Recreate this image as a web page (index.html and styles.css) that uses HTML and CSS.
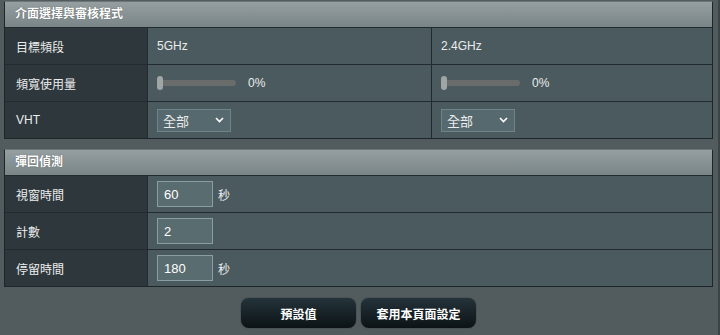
FILE: index.html
```html
<!DOCTYPE html>
<html lang="zh-Hant">
<head>
<meta charset="utf-8">
<link rel="stylesheet" href="styles.css">
</head>
<body>
<div class="page">
  <section class="table">
    <div class="thead">介面選擇與審核程式</div>
    <div class="row">
      <div class="label">目標頻段</div>
      <div class="cell">5GHz</div>
      <div class="cell">2.4GHz</div>
    </div>
    <div class="row">
      <div class="label">頻寬使用量</div>
      <div class="cell"><span class="slider"><span class="thumb"></span></span><span class="pct">0%</span></div>
      <div class="cell"><span class="slider"><span class="thumb"></span></span><span class="pct">0%</span></div>
    </div>
    <div class="row">
      <div class="label">VHT</div>
      <div class="cell"><span class="select">全部<svg class="chev" width="9" height="6" viewBox="0 0 9 6"><path d="M1 1 L4.5 4.5 L8 1" fill="none" stroke="#fff" stroke-width="1.6"/></svg></span></div>
      <div class="cell"><span class="select">全部<svg class="chev" width="9" height="6" viewBox="0 0 9 6"><path d="M1 1 L4.5 4.5 L8 1" fill="none" stroke="#fff" stroke-width="1.6"/></svg></span></div>
    </div>
  </section>

  <section class="table second">
    <div class="thead">彈回偵測</div>
    <div class="row row2">
      <div class="label">視窗時間</div>
      <div class="cell"><span class="input">60</span><span class="unit">秒</span></div>
    </div>
    <div class="row row2">
      <div class="label">計數</div>
      <div class="cell"><span class="input">2</span></div>
    </div>
    <div class="row row2">
      <div class="label">停留時間</div>
      <div class="cell"><span class="input">180</span><span class="unit">秒</span></div>
    </div>
  </section>

  <div class="actions">
    <button class="btn">預設值</button>
    <button class="btn">套用本頁面設定</button>
  </div>
</div>
</body>
</html>
```

FILE: styles.css
```css
html, body {
  margin: 0;
  padding: 0;
  background: #525b5d;
}
body {
  width: 720px;
  height: 335px;
  overflow: hidden;
  font-family: "Liberation Sans", "Noto Sans CJK TC", sans-serif;
  font-size: 12px;
  color: #ececec;
}
.page {
  padding: 1px 5px 0 4px;
  border-right: 2px solid #3c4446;
  width: 709px;
  height: 334px;
}
.table {
  border: 1px solid #1e2629;
  border-top-color: #6c7679;
}
.second {
  margin-top: 10px;
}
.thead {
  height: 25px;
  line-height: 25px;
  padding-left: 10px;
  background: linear-gradient(#959fa1, #7a8587);
  border-bottom: 1px solid #212a2d;
  font-weight: bold;
  color: #fff;
  text-shadow: 0 0 1px rgba(0,0,0,0.5);
}
.row {
  display: grid;
  grid-template-columns: 142px 284px 1fr;
  height: 37px;
  box-sizing: border-box;
  border-bottom: 1px solid #222b2e;
}
.row:last-child {
  border-bottom: none;
  height: 36px;
}
.row2 {
  grid-template-columns: 142px 1fr;
}
.label {
  background: #2e383c;
  padding-left: 11px;
  display: flex;
  align-items: center;
}
.cell {
  background: #4a5a5e;
  border-left: 1px solid #222b2e;
  padding-left: 9px;
  display: flex;
  align-items: center;
}
.slider {
  position: relative;
  width: 78px;
  height: 6px;
  background: #6a6c6c;
  border-radius: 3px;
  margin-left: 1px;
}
.thumb {
  position: absolute;
  left: -1px;
  top: -4px;
  width: 6px;
  height: 14px;
  background: #a0a6a6;
  border-radius: 3px;
}
.pct {
  margin-left: 12px;
}
.select {
  width: 74px;
  height: 23px;
  box-sizing: border-box;
  border: 1px solid #6f8489;
  background: #56696e;
  display: flex;
  align-items: center;
  justify-content: space-between;
  padding: 0 6px 0 5px;
  font-size: 13px;
}
.input {
  width: 56px;
  height: 26px;
  box-sizing: border-box;
  border: 1px solid #8a9ea2;
  background: #596c70;
  display: flex;
  align-items: center;
  padding-left: 6px;
  font-size: 13px;
  color: #fff;
}
.unit {
  margin-left: 5px;
}
.actions {
  display: flex;
  justify-content: center;
  gap: 5px;
  margin-top: 11px;
}
.btn {
  width: 115px;
  height: 30px;
  border: none;
  border-radius: 8px;
  background: linear-gradient(#24333a, #0c1316);
  color: #fff;
  font-family: "Liberation Sans", "Noto Sans CJK TC", sans-serif;
  font-size: 12px;
  font-weight: bold;
  box-shadow: 0 0 1px #111;
}
```
